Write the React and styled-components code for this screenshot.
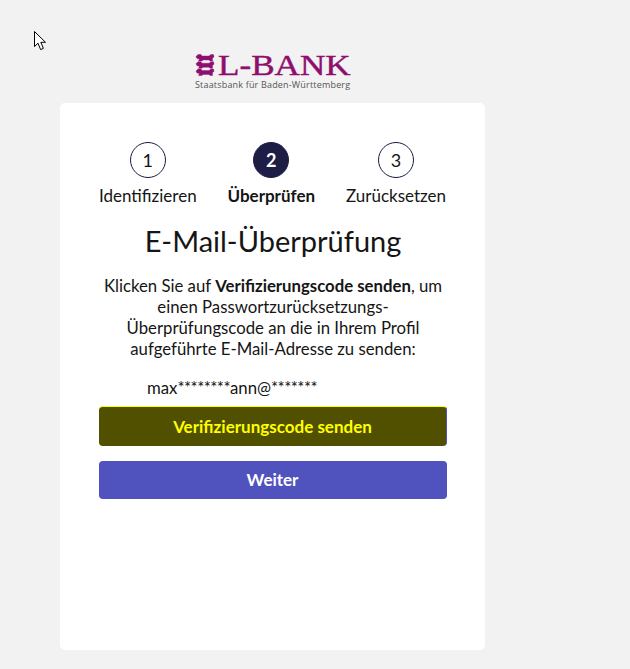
import styled, { createGlobalStyle } from "styled-components";

const GlobalStyle = createGlobalStyle`
  html, body {
    margin: 0;
    background: #f2f2f2;
    font-family: Lato, "Liberation Sans", sans-serif;
    color: #151515;
  }
`;

const steps = [
  { number: 1, label: "Identifizieren" },
  { number: 2, label: "Überprüfen", active: true },
  { number: 3, label: "Zurücksetzen" },
];

const Cursor = () => (
  <CursorSvg width="16" height="22" viewBox="0 0 16 22">
    <path
      d="M1.5 1.5V16.5L5 13.2L7.6 19.6L10.4 18.4L7.8 12.3H12.5Z"
      fill="#fff"
      stroke="#000"
      strokeWidth="1"
    />
  </CursorSvg>
);

// one of the three lions in the crest
const Lion = ({ y }) => (
  <path
    transform={`translate(1 ${y})`}
    d="M0 2L2 0H5L6 1.5H13L15 0H17.5L18 2.5L16.5 3.5V6.5H14L13 5.5H7L6 6.5H2.5L3.5 4.5L1 4Z"
  />
);

const Crest = () => (
  <svg width="20" height="22" viewBox="0 0 20 22">
    <g fill="#8e0f6e" stroke="#8e0f6e" strokeWidth="0.4">
      <Lion y={0.5} />
      <Lion y={7.7} />
      <Lion y={15} />
    </g>
  </svg>
);

export default function App() {
  return (
    <>
      <GlobalStyle />
      <Cursor />
      <Page>
        <Logo>
          <LogoTop>
            <Crest />
            <LogoName>L-BANK</LogoName>
          </LogoTop>
          <LogoClaim>Staatsbank für Baden-Württemberg</LogoClaim>
        </Logo>
        <Card>
          <Stepper>
            {steps.map((step) => (
              <Step key={step.number}>
                <Circle $active={step.active}>{step.number}</Circle>
                <StepLabel $active={step.active}>{step.label}</StepLabel>
              </Step>
            ))}
          </Stepper>
          <Title>E-Mail-Überprüfung</Title>
          <Description>
            Klicken Sie auf <strong>Verifizierungscode senden</strong>, um
            einen Passwortzurücksetzungs-Überprüfungscode an die in Ihrem Profil
            aufgeführte E-Mail-Adresse zu senden:
          </Description>
          <MaskedMail>
            max<Stars>********</Stars>ann@<Stars>*******</Stars>
          </MaskedMail>
          <SendButton type="button">Verifizierungscode senden</SendButton>
          <NextButton type="button">Weiter</NextButton>
        </Card>
      </Page>
    </>
  );
}

const CursorSvg = styled.svg`
  position: absolute;
  left: 33px;
  top: 30px;
`;

const Page = styled.div`
  width: 425px;
  margin-left: 60px;
  padding-top: 54px;
`;

const Logo = styled.div`
  display: flex;
  flex-direction: column;
  align-items: flex-start;
  width: 156px;
  height: 49px;
  margin: 0 auto 0 135px;
`;

const LogoTop = styled.div`
  display: flex;
  align-items: flex-start;
  gap: 3px;
  height: 24px;
`;

const LogoName = styled.span`
  font-family: "Liberation Serif", serif;
  font-size: 30px;
  line-height: 22px;
  color: #8e0f6e;
  -webkit-text-stroke: 0.4px #8e0f6e;
  white-space: nowrap;
  transform: scaleX(1.17);
  transform-origin: left center;
`;

const LogoClaim = styled.span`
  font-family: "Open Sans", sans-serif;
  font-size: 9px;
  line-height: 12px;
  margin-top: 1px;
  color: #555;
  letter-spacing: 0.18px;
  white-space: nowrap;
`;

const Card = styled.div`
  box-sizing: border-box;
  height: 547px;
  padding: 39px 38px 0 39px;
  background: #fff;
  border-radius: 5px;
  display: flex;
  flex-direction: column;
`;

const Stepper = styled.div`
  display: flex;
  justify-content: space-between;
  padding-right: 1px;
`;

const Step = styled.div`
  display: flex;
  flex-direction: column;
  align-items: center;
  gap: 8px;
`;

const Circle = styled.div`
  box-sizing: border-box;
  width: 36px;
  height: 36px;
  border-radius: 50%;
  border: 1px solid #1d1d45;
  background: ${(p) => (p.$active ? "#1d1d45" : "#fff")};
  color: ${(p) => (p.$active ? "#fff" : "#151515")};
  font-weight: ${(p) => (p.$active ? 700 : 400)};
  font-size: 18px;
  display: flex;
  align-items: center;
  justify-content: center;
`;

const StepLabel = styled.span`
  font-size: 17px;
  line-height: 20px;
  font-weight: ${(p) => (p.$active ? 700 : 400)};
`;

const Title = styled.h1`
  margin: 17px 0 0;
  font-size: 29px;
  line-height: 36px;
  font-weight: 400;
  text-align: center;
`;

const Description = styled.p`
  margin: 16px 0 0;
  font-size: 16.75px;
  line-height: 21px;
  text-align: center;
`;

const MaskedMail = styled.div`
  margin: 18px 0 0 48px;
  font-size: 16.75px;
  line-height: 21px;
`;

const Stars = styled.span`
  letter-spacing: -0.55px;
`;

const Button = styled.button`
  box-sizing: border-box;
  width: 100%;
  border-radius: 4px;
  font-family: inherit;
  font-size: 17px;
  font-weight: 700;
  padding: 0;
`;

const SendButton = styled(Button)`
  height: 40px;
  margin-top: 8px;
  background: #505000;
  color: #ffff00;
  border: none;
  border-top: 1px solid #ffff00;
  border-right: 1px solid #5053bd;
`;

const NextButton = styled(Button)`
  height: 38px;
  margin-top: 15px;
  padding: 0 1px 1px 0;
  background: #5053bd;
  color: #fff;
  border: none;
`;
